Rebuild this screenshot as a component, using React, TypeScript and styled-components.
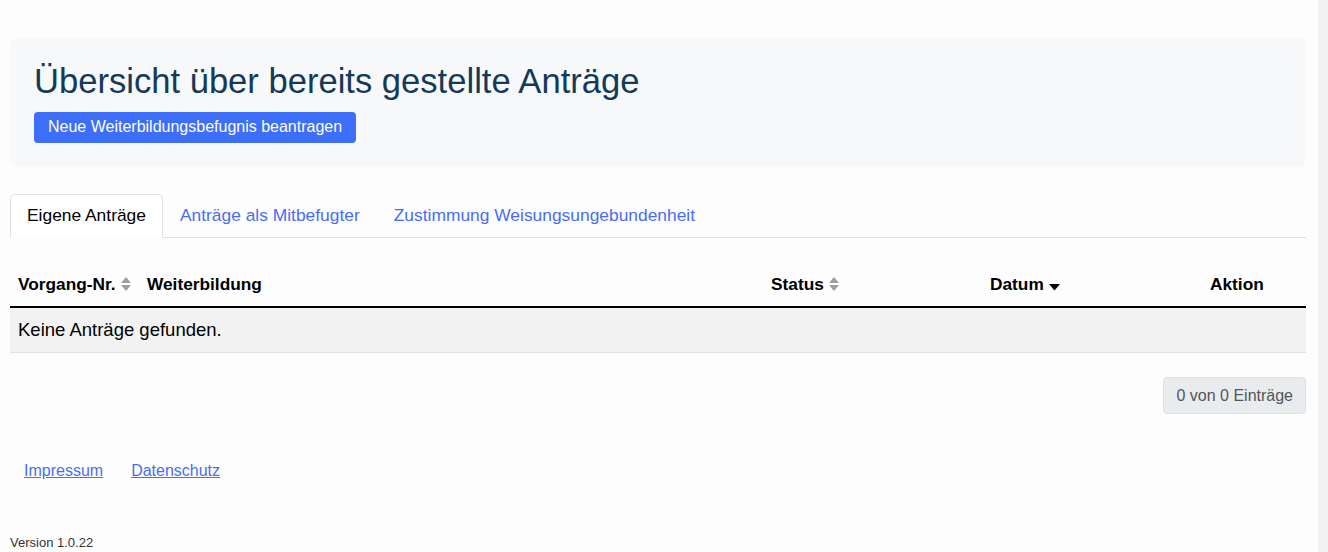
import React from "react";
import styled, { createGlobalStyle } from "styled-components";

const GlobalStyle = createGlobalStyle`
  html, body {
    margin: 0;
    padding: 0;
    background: #fdfdfd;
    font-family: "Liberation Sans", Arial, sans-serif;
    color: #000;
  }
`;

const Shell = styled.div`
  display: flex;
  width: 1328px;
  min-height: 552px;
`;

const Main = styled.main`
  flex: 1;
  padding: 38px 12px 0 10px;
  display: flex;
  flex-direction: column;
`;

const ScrollTrack = styled.div`
  width: 10px;
  background: #f1f1f3;
`;

const Jumbotron = styled.section`
  background: #f7f8fa;
  border-radius: 8px;
  padding: 22px 24px 24px;
  display: flex;
  flex-direction: column;
  align-items: flex-start;
`;

const Title = styled.h1`
  margin: 0 0 10px;
  font-weight: 400;
  font-size: 34.6px;
  line-height: 42px;
  color: #143a58;
`;

const PrimaryButton = styled.button`
  font-family: inherit;
  font-size: 16px;
  line-height: 20px;
  color: #fff;
  background: #3d6ef7;
  border: none;
  border-radius: 4px;
  padding: 5px 14px 6px;
  cursor: pointer;
`;

const Tabs = styled.nav`
  display: flex;
  margin-top: 27px;
  border-bottom: 1px solid #dee2e6;
`;

const Tab = styled.a<{ $active?: boolean }>`
  font-size: 17.4px;
  line-height: 20px;
  padding: 10px 16px 12px 16px;
  margin-bottom: -1px;
  border: 1px solid ${p => (p.$active ? "#dee2e6" : "transparent")};
  border-bottom-color: ${p => (p.$active ? "#fdfdfd" : "transparent")};
  border-radius: 5px 5px 0 0;
  background: ${p => (p.$active ? "#fff" : "transparent")};
  color: ${p => (p.$active ? "#000" : "#4a6cf7")};
  text-decoration: none;
  cursor: pointer;
`;

const Table = styled.div`
  margin-top: 26px;
`;

const HeadRow = styled.div`
  display: grid;
  grid-template-columns: 129px 624px 219px 220px 1fr;
  border-bottom: 2px solid #000;
`;

const HeadCell = styled.div`
  display: flex;
  align-items: center;
  gap: 5px;
  padding: 10px 8px 12px;
  font-weight: 700;
  font-size: 17.3px;
  line-height: 20px;
`;

const EmptyRow = styled.div`
  background: #f2f2f2;
  border-bottom: 1px solid #dee2e6;
  padding: 11px 8px 12px;
  font-size: 18.5px;
  line-height: 21px;
`;

const InfoBar = styled.div`
  display: flex;
  justify-content: flex-end;
  margin-top: 24px;
`;

const InfoBox = styled.div`
  background: #e9ecef;
  border: 1px solid #dee2e6;
  border-radius: 4px;
  padding: 8px 12px;
  font-size: 16px;
  line-height: 19px;
  color: #555;
`;

const FooterLinks = styled.div`
  display: flex;
  gap: 28px;
  margin-top: 47px;
  padding-left: 14px;
`;

const FooterLink = styled.a`
  color: #4a6cf7;
  text-decoration: underline;
  font-size: 16px;
  line-height: 19px;
`;

const Version = styled.div`
  margin-top: 55px;
  font-size: 13px;
  line-height: 16px;
  color: #333;
`;

const SortBoth = () => (
  <svg width="10" height="14" viewBox="0 0 10 14">
    <path d="M5 0 L10 6 H0 Z M5 14 L10 8 H0 Z" fill="#a0a0a0" />
  </svg>
);

const SortDown = () => (
  <svg width="11" height="7" viewBox="0 0 11 7" style={{ marginTop: 6 }}>
    <path d="M0 0 H11 L5.5 6.5 Z" fill="#000" />
  </svg>
);

export default function App() {
  return (
    <Shell>
      <GlobalStyle />
      <Main>
        <Jumbotron>
          <Title>Übersicht über bereits gestellte Anträge</Title>
          <PrimaryButton>Neue Weiterbildungsbefugnis beantragen</PrimaryButton>
        </Jumbotron>

        <Tabs>
          <Tab $active>Eigene Anträge</Tab>
          <Tab>Anträge als Mitbefugter</Tab>
          <Tab>Zustimmung Weisungsungebundenheit</Tab>
        </Tabs>

        <Table>
          <HeadRow>
            <HeadCell>Vorgang-Nr. <SortBoth /></HeadCell>
            <HeadCell>Weiterbildung</HeadCell>
            <HeadCell>Status <SortBoth /></HeadCell>
            <HeadCell>Datum <SortDown /></HeadCell>
            <HeadCell>Aktion</HeadCell>
          </HeadRow>
          <EmptyRow>Keine Anträge gefunden.</EmptyRow>
        </Table>

        <InfoBar>
          <InfoBox>0 von 0 Einträge</InfoBox>
        </InfoBar>

        <FooterLinks>
          <FooterLink href="#">Impressum</FooterLink>
          <FooterLink href="#">Datenschutz</FooterLink>
        </FooterLinks>

        <Version>Version 1.0.22</Version>
      </Main>
      <ScrollTrack />
    </Shell>
  );
}
